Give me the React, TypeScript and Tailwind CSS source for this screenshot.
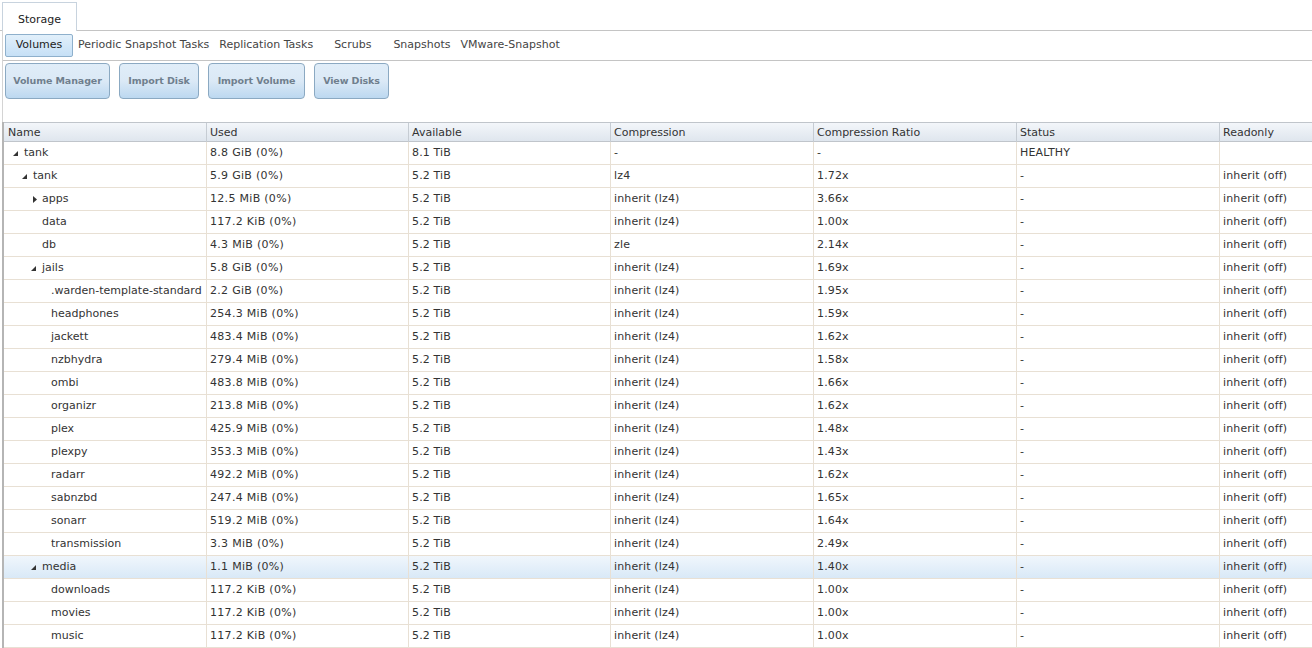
const cols = ["Name", "Used", "Available", "Compression", "Compression Ratio", "Status", "Readonly"];
const widths = "grid-cols-[202px_202px_202px_203px_203px_203px_93px]";

type Row = { name: string; depth: number; arrow?: "open" | "closed"; used: string; avail: string; comp: string; ratio: string; status?: string; ro?: string; selected?: boolean };

const child = (name: string, used: string, ratio: string): Row => ({ name, depth: 3, used, avail: "5.2 TiB", comp: "inherit (lz4)", ratio });

const rows: Row[] = [
  { name: "tank", depth: 0, arrow: "open", used: "8.8 GiB (0%)", avail: "8.1 TiB", comp: "-", ratio: "-", status: "HEALTHY", ro: "" },
  { name: "tank", depth: 1, arrow: "open", used: "5.9 GiB (0%)", avail: "5.2 TiB", comp: "lz4", ratio: "1.72x" },
  { name: "apps", depth: 2, arrow: "closed", used: "12.5 MiB (0%)", avail: "5.2 TiB", comp: "inherit (lz4)", ratio: "3.66x" },
  { name: "data", depth: 2, used: "117.2 KiB (0%)", avail: "5.2 TiB", comp: "inherit (lz4)", ratio: "1.00x" },
  { name: "db", depth: 2, used: "4.3 MiB (0%)", avail: "5.2 TiB", comp: "zle", ratio: "2.14x" },
  { name: "jails", depth: 2, arrow: "open", used: "5.8 GiB (0%)", avail: "5.2 TiB", comp: "inherit (lz4)", ratio: "1.69x" },
  child(".warden-template-standard", "2.2 GiB (0%)", "1.95x"),
  child("headphones", "254.3 MiB (0%)", "1.59x"),
  child("jackett", "483.4 MiB (0%)", "1.62x"),
  child("nzbhydra", "279.4 MiB (0%)", "1.58x"),
  child("ombi", "483.8 MiB (0%)", "1.66x"),
  child("organizr", "213.8 MiB (0%)", "1.62x"),
  child("plex", "425.9 MiB (0%)", "1.48x"),
  child("plexpy", "353.3 MiB (0%)", "1.43x"),
  child("radarr", "492.2 MiB (0%)", "1.62x"),
  child("sabnzbd", "247.4 MiB (0%)", "1.65x"),
  child("sonarr", "519.2 MiB (0%)", "1.64x"),
  child("transmission", "3.3 MiB (0%)", "2.49x"),
  { name: "media", depth: 2, arrow: "open", used: "1.1 MiB (0%)", avail: "5.2 TiB", comp: "inherit (lz4)", ratio: "1.40x", selected: true },
  child("downloads", "117.2 KiB (0%)", "1.00x"),
  child("movies", "117.2 KiB (0%)", "1.00x"),
  child("music", "117.2 KiB (0%)", "1.00x"),
];

const subTabs = [
  { label: "Periodic Snapshot Tasks", cls: "ml-[5px]" },
  { label: "Replication Tasks", cls: "ml-[10px]" },
  { label: "Scrubs", cls: "ml-[21px]" },
  { label: "Snapshots", cls: "ml-[22px]" },
  { label: "VMware-Snapshot", cls: "ml-[10px]" },
];

const buttons = [
  { label: "Volume Manager", cls: "w-[105px]" },
  { label: "Import Disk", cls: "w-[80px]" },
  { label: "Import Volume", cls: "w-[97px]" },
  { label: "View Disks", cls: "w-[75px]" },
];

const indents = ["pl-[9px]", "pl-[18px]", "pl-[27px]", "pl-[47px]"];

function Arrow({ kind }: { kind: "open" | "closed" }) {
  return (
    <svg width="10" height="10" viewBox="0 0 10 10" className="mr-[1px] shrink-0 text-[#333]">
      {kind === "open" ? <path d="M5 3 L5 8 L0 8 Z" fill="currentColor" /> : <path d="M2 2 L6 5.5 L2 9 Z" fill="currentColor" />}
    </svg>
  );
}

function Cell({ children, track }: { children?: React.ReactNode; track?: string }) {
  return <div className={`flex h-full items-center overflow-hidden whitespace-nowrap border-l border-[#e8e0d4] pl-[3px] ${track ?? "tracking-[0.15px]"}`}>{children}</div>;
}

export default function App() {
  return (
    <div className="h-[648px] w-[1312px] overflow-hidden bg-white font-['DejaVu_Sans','Verdana',sans-serif] text-[11px] text-[#333]">
      <div className="flex h-[31px] items-end border-b border-[#c4c4c4] pl-[2px]">
        <div className="mb-[-1px] flex h-[29px] w-[75px] items-center justify-center border border-b-0 border-[#c8d3de] bg-white pt-[7px] text-[#222]">Storage</div>
      </div>
      <div className="ml-[2px] border-l border-[#d4d4d4]">
        <div className="flex h-[30px] items-center border-b border-[#c4c4c4] pl-[2px]">
          <div className="flex h-[23px] w-[68px] items-center justify-center rounded-[2px] border border-[#8eb0cc] bg-gradient-to-b from-[#e2f0fb] to-[#c6e0f6] text-[#222]">Volumes</div>
          {subTabs.map((t) => (
            <div key={t.label} className={`${t.cls} shrink-0 text-[#444]`}>{t.label}</div>
          ))}
        </div>
        <div className="flex h-[61px] items-start gap-[9px] pl-[2px] pt-[2px]">
          {buttons.map((b) => (
            <div key={b.label} className={`${b.cls} flex h-[36px] items-center justify-center rounded-[4px] border border-[#8ba9c2] bg-gradient-to-b from-[#e0edf8] via-[#dbe9f6] to-[#bcd8f0] pt-[1px] text-[9.5px] font-bold tracking-[-0.1px] text-[#6f7f8e]`}>{b.label}</div>
          ))}
        </div>
      </div>
      <div className="ml-[2px] border-l-[2px] border-[#b5b5b5]">
        <div className={`grid ${widths} h-[20px] items-center border-y border-[#c0c5cb] bg-gradient-to-b from-[#f3f6fa] to-[#dfe6ee] text-[#333]`}>
          {cols.map((c, i) => (
            <div key={c} className={`flex h-full items-center pt-[2px] ${i === 0 ? "pl-[4px]" : "border-l border-[#c6ccd3] pl-[3px]"}`}>{c}</div>
          ))}
        </div>
        {rows.map((r, i) => (
          <div key={`${r.name}-${i}`} className={`grid ${widths} h-[23px] items-center border-b border-[#e8e0d4] ${r.selected ? "bg-gradient-to-b from-[#f0f6fc] to-[#d9e9f7]" : "bg-white"}`}>
            <div className={`flex h-full items-center overflow-hidden whitespace-nowrap ${indents[r.depth]}`}>
              {r.arrow ? <Arrow kind={r.arrow} /> : r.depth === 2 ? <span className="w-[11px] shrink-0" /> : null}
              <span>{r.name}</span>
            </div>
            <Cell track="tracking-[0.3px]">{r.used}</Cell>
            <Cell>{r.avail}</Cell>
            <Cell>{r.comp}</Cell>
            <Cell>{r.ratio}</Cell>
            <Cell>{r.status ?? "-"}</Cell>
            <Cell>{r.ro ?? "inherit (off)"}</Cell>
          </div>
        ))}
      </div>
    </div>
  );
}
